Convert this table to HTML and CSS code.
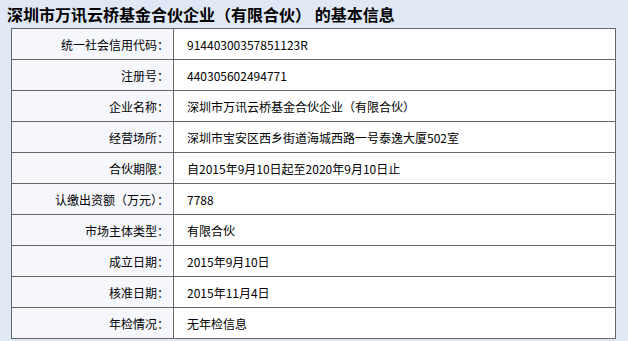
FILE: index.html
```html
<!DOCTYPE html>
<html lang="zh-CN">
<head>
  <meta charset="UTF-8">
  <link rel="stylesheet" href="styles.css">
</head>
<body>

  <h2 class="info-title">深圳市万讯云桥基金合伙企业（有限合伙） 的基本信息</h2>

  <table class="info-table">
    <tr><th>统一社会信用代码：</th><td>91440300357851123R</td></tr>
    <tr><th>注册号：</th><td>440305602494771</td></tr>
    <tr><th>企业名称：</th><td>深圳市万讯云桥基金合伙企业（有限合伙）</td></tr>
    <tr><th>经营场所：</th><td>深圳市宝安区西乡街道海城西路一号泰逸大厦502室</td></tr>
    <tr><th>合伙期限：</th><td>自2015年9月10日起至2020年9月10日止</td></tr>
    <tr><th>认缴出资额（万元）：</th><td>7788</td></tr>
    <tr><th>市场主体类型：</th><td>有限合伙</td></tr>
    <tr><th>成立日期：</th><td>2015年9月10日</td></tr>
    <tr><th>核准日期：</th><td>2015年11月4日</td></tr>
    <tr><th>年检情况：</th><td>无年检信息</td></tr>
  </table>

</body>
</html>
```

FILE: styles.css
```css
body {
  margin: 0;
  padding: 0 12px 0 11px;
  background-color: #e1e8f5;
  font-family: "Noto Sans CJK SC", "Liberation Sans", sans-serif;
  color: #000;
}

.info-title {
  margin: 0 0 0 -4px;
  padding-top: 2px;
  height: 26px;
  font-size: 16px;
  line-height: 24px;
  font-weight: bold;
  white-space: nowrap;
}

.info-table {
  width: 605px;
  border-collapse: collapse;
  border: 1px solid #666;
  font-size: 12px;
}

.info-table th,
.info-table td {
  height: 30px;
  padding: 0;
  border: 1px solid #666;
  font-weight: normal;
}

.info-table th {
  width: 157px;
  padding-right: 4px;
  text-align: right;
  background-color: #f5f7fd;
}

.info-table td {
  padding-left: 13px;
  text-align: left;
  background-color: #fff;
}
```
